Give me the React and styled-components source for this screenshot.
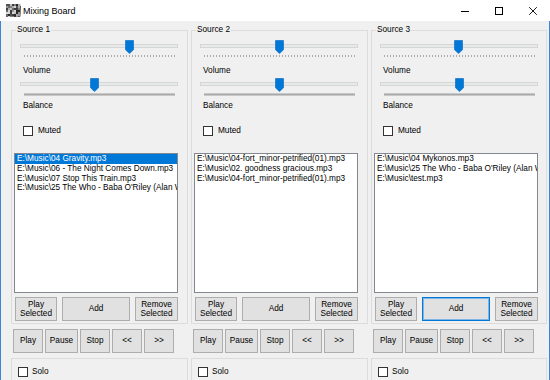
import React from 'react';
import styled, { createGlobalStyle } from 'styled-components';

const Global = createGlobalStyle`
  html, body { margin: 0; padding: 0; width: 550px; height: 380px; overflow: hidden; background: #f0f0f0; }
  body { font-family: "Liberation Sans", Arial, sans-serif; color: #000; }
  * { box-sizing: border-box; }
`;

const Window = styled.div`
  width: 550px;
  height: 380px;
  display: flex;
  flex-direction: column;
  overflow: hidden;
  background: #fff;
`;

const TitleBar = styled.div`
  height: 21px;
  flex-shrink: 0;
  display: flex;
  align-items: center;
  background: #fff;
`;

const AppIcon = styled.svg`
  display: block;
  margin-left: 6px;
  width: 15px;
  height: 13px;
`;

const Title = styled.span`
  margin-left: 2px;
  font-size: 9px;
  line-height: 12px;
`;

const Spacer = styled.div`
  flex: 1;
`;

const CaptionButton = styled.div`
  width: 34px;
  height: 21px;
  display: flex;
  align-items: center;
  justify-content: center;
  padding-top: 1px;
`;

const Client = styled.div`
  flex: 1;
  min-height: 0;
  background: #f0f0f0;
  border-left: 1px solid #3b87d6;
  border-right: 1px solid #3b87d6;
  padding-left: 10px;
  display: grid;
  grid-template-columns: 177px 177px 176px;
  column-gap: 3px;
  align-content: start;
`;

const Column = styled.div`
  display: flex;
  flex-direction: column;
`;

const GroupBox = styled.div`
  margin-top: 9px;
  border: 1px solid #dcdcdc;
  display: flex;
  flex-direction: column;
  align-items: flex-start;
  padding-bottom: 2px;
`;

const Caption = styled.span`
  margin: -6px 0 0 4px;
  padding: 0 1px;
  height: 10px;
  background: #f0f0f0;
  font-size: 8.25px;
  line-height: 10px;
  white-space: nowrap;
`;

const SliderWrap = styled.div`
  position: relative;
  margin: ${p => p.$top}px 0 0 8px;
  width: 158px;
  height: 18px;
`;

const Track = styled.div`
  margin-top: 4px;
  height: 4px;
  border: 1px solid #d6d6d6;
  background: #e7eaea;
`;

const Ticks = styled.div`
  margin: 7px 0 0 4px;
  width: 151px;
  height: ${p => (p.$dense ? 3 : 2)}px;
  background: ${p =>
    p.$dense
      ? 'linear-gradient(to bottom, #c8c8c8 0 1px, #a9a9a9 1px 2px, #c8c8c8 2px 3px)'
      : 'repeating-linear-gradient(to right, #acacac 0 1px, transparent 1px 3px)'};
`;

const Thumb = styled.svg`
  position: absolute;
  top: 0;
  width: 9px;
  height: 14px;
  display: block;
`;

const FieldLabel = styled.div`
  margin: ${p => p.$top}px 0 0 11px;
  font-size: 8.25px;
  line-height: 10px;
  height: 10px;
`;

const CheckRow = styled.label`
  display: flex;
  align-items: center;
  height: 10px;
  margin: ${p => p.$top}px 0 0 ${p => p.$left}px;
  font-size: 8.25px;
  line-height: 10px;
`;

const Box = styled.span`
  width: 10px;
  height: 10px;
  border: 1px solid #333;
  background: #fff;
  flex-shrink: 0;
`;

const CheckText = styled.span`
  margin-left: ${p => p.$gap}px;
`;

const ListBox = styled.div`
  margin: 17px 0 0 2px;
  width: 164px;
  height: 140px;
  border: 1px solid #828790;
  background: #fff;
  overflow: hidden;
`;

const ListItem = styled.div`
  height: 9.75px;
  line-height: 9.75px;
  font-size: 8.25px;
  padding-left: 2px;
  white-space: nowrap;
  overflow: hidden;
  background: ${p => (p.$selected ? '#0078d7' : 'transparent')};
  color: ${p => (p.$selected ? '#fff' : '#000')};
`;

const ButtonRow = styled.div`
  margin: 4px 0 0 3px;
  width: 163px;
  height: 24px;
  display: flex;
  justify-content: space-between;
`;

const Button = styled.div`
  width: ${p => p.$w}px;
  height: 24px;
  background: #e1e1e1;
  border: 1px solid ${p => (p.$focused ? '#0078d7' : '#adadad')};
  box-shadow: ${p => (p.$focused ? 'inset 0 0 0 1px #7fb6e6' : 'none')};
  display: flex;
  align-items: center;
  justify-content: center;
  text-align: center;
  font-size: 8.25px;
  line-height: 9.5px;
  white-space: pre-line;
  flex-shrink: 0;
`;

const TransportRow = styled.div`
  margin: 5px 0 0 2px;
  display: flex;
  gap: 2px;
`;

const SoloBox = styled.div`
  margin-top: 5px;
  height: 40px;
  border: 1px solid #dcdcdc;
  border-bottom: none;
  padding-top: 8px;
`;

const iconCells = (() => {
  const cells = [];
  let s = 7;
  for (let y = 0; y < 13; y += 2) {
    for (let x = 0; x < 15; x += 2) {
      s = (s * 73 + 41) % 101;
      const g = 40 + (s % 9) * 22;
      cells.push({ x, y, c: `rgb(${g},${g},${g})` });
    }
  }
  return cells;
})();

function Slider({ top, value, dense }) {
  const left = 4 + value * 150 - 4.5;
  return (
    <SliderWrap $top={top}>
      <Track />
      <Ticks $dense={dense} />
      <Thumb viewBox="0 0 9 14" style={{ left: `${left}px` }}>
        <path d="M0.5 0.5 H8.5 V9.8 L4.5 13.6 L0.5 9.8 Z" fill="#0078d7" stroke="#0067c0" strokeWidth="0.6" />
      </Thumb>
    </SliderWrap>
  );
}

const sources = [
  {
    name: 'Source 1',
    volume: 0.7,
    balance: 0.473,
    selected: 0,
    files: [
      'E:\\Music\\04 Gravity.mp3',
      'E:\\Music\\06 - The Night Comes Down.mp3',
      'E:\\Music\\07 Stop This Train.mp3',
      "E:\\Music\\25 The Who - Baba O'Riley (Alan Walker Remix).mp3",
    ],
  },
  {
    name: 'Source 2',
    volume: 0.5,
    balance: 0.5,
    selected: -1,
    files: [
      'E:\\Music\\04-fort_minor-petrified(01).mp3',
      'E:\\Music\\02. goodness gracious.mp3',
      'E:\\Music\\04-fort_minor-petrified(01).mp3',
    ],
  },
  {
    name: 'Source 3',
    volume: 0.495,
    balance: 0.5,
    selected: -1,
    focusedAdd: true,
    files: [
      'E:\\Music\\04 Mykonos.mp3',
      "E:\\Music\\25 The Who - Baba O'Riley (Alan Walker Remix).mp3",
      'E:\\Music\\test.mp3',
    ],
  },
];

const transport = [
  { label: 'Play', w: 30 },
  { label: 'Pause', w: 33 },
  { label: 'Stop', w: 30 },
  { label: '<<', w: 30 },
  { label: '>>', w: 30 },
];

function SourcePanel({ src }) {
  return (
    <Column>
      <GroupBox>
        <Caption>{src.name}</Caption>
        <Slider top={5} value={src.volume} />
        <FieldLabel $top={8}>Volume</FieldLabel>
        <Slider top={2} value={src.balance} dense />
        <FieldLabel $top={5}>Balance</FieldLabel>
        <CheckRow $top={15} $left={11}>
          <Box />
          <CheckText $gap={5}>Muted</CheckText>
        </CheckRow>
        <ListBox>
          {src.files.map((f, i) => (
            <ListItem key={i} $selected={i === src.selected}>{f}</ListItem>
          ))}
        </ListBox>
        <ButtonRow>
          <Button $w={42}>{'Play\nSelected'}</Button>
          <Button $w={68} $focused={src.focusedAdd}>Add</Button>
          <Button $w={43}>{'Remove\nSelected'}</Button>
        </ButtonRow>
      </GroupBox>
      <TransportRow>
        {transport.map(t => (
          <Button key={t.label} $w={t.w}>{t.label}</Button>
        ))}
      </TransportRow>
      <SoloBox>
        <CheckRow $top={0} $left={6}>
          <Box />
          <CheckText $gap={4}>Solo</CheckText>
        </CheckRow>
      </SoloBox>
    </Column>
  );
}

export default function App() {
  return (
    <>
      <Global />
      <Window>
        <TitleBar>
          <AppIcon viewBox="0 0 15 13">
            {iconCells.map((c, i) => (
              <rect key={i} x={c.x} y={c.y} width="2" height="2" fill={c.c} />
            ))}
          </AppIcon>
          <Title>Mixing Board</Title>
          <Spacer />
          <CaptionButton>
            <svg width="10" height="10" viewBox="0 0 10 10"><path d="M1 5.5 H9" stroke="#000" strokeWidth="1" /></svg>
          </CaptionButton>
          <CaptionButton>
            <svg width="10" height="10" viewBox="0 0 10 10"><rect x="1.5" y="1.5" width="7" height="7" fill="none" stroke="#000" strokeWidth="1" /></svg>
          </CaptionButton>
          <CaptionButton>
            <svg width="10" height="10" viewBox="0 0 10 10"><path d="M1.2 1.2 L8.8 8.8 M8.8 1.2 L1.2 8.8" stroke="#000" strokeWidth="0.9" /></svg>
          </CaptionButton>
        </TitleBar>
        <Client>
          {sources.map(s => (
            <SourcePanel key={s.name} src={s} />
          ))}
        </Client>
      </Window>
    </>
  );
}
